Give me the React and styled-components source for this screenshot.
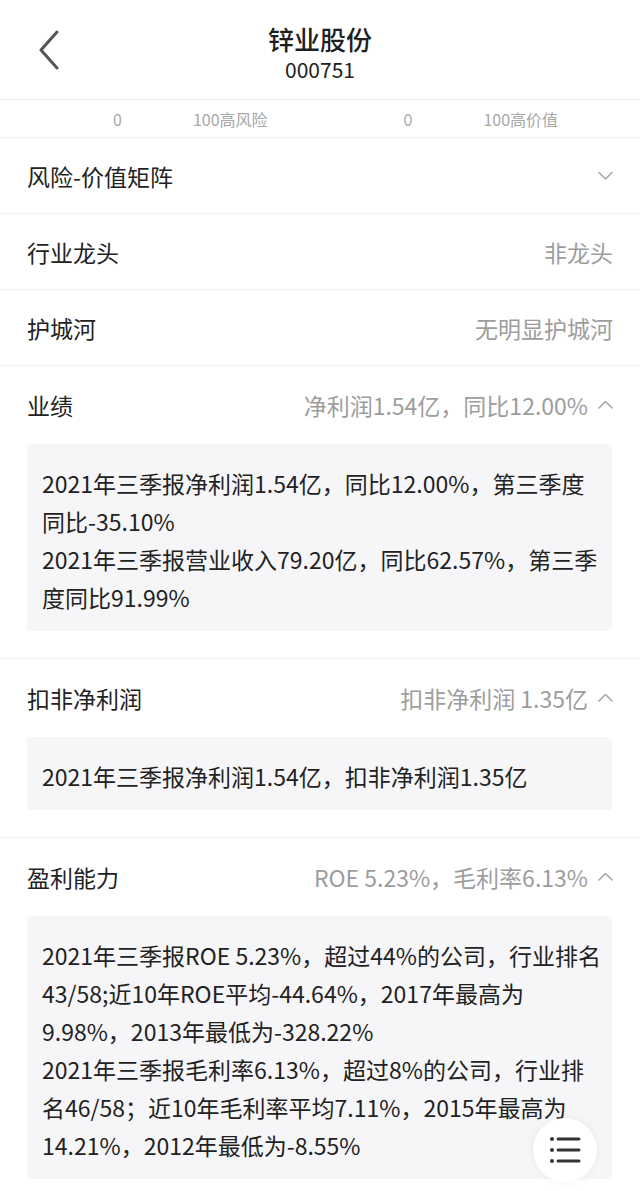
import React from 'react'
import styled, { createGlobalStyle } from 'styled-components'

const GlobalStyle = createGlobalStyle`
    html, body {
        margin: 0;
        padding: 0;
        background: #ffffff;
    }
    body {
        font-family: "Noto Sans CJK SC", "Noto Sans", sans-serif;
        color: #222222;
    }
`;

const Page = styled.div`
    width: 640px;
    min-height: 1191px;
    position: relative;
    overflow: hidden;
    background: #fff;
`;

const Header = styled.header`
    height: 99px;
    display: grid;
    grid-template-columns: 80px 1fr 80px;
    align-items: center;
    border-bottom: 1px solid #ececec;
    box-shadow: 0 1px 2px rgba(0, 0, 0, 0.03);
`;

const BackButton = styled.div`
    display: flex;
    align-items: center;
    padding-left: 38px;
    height: 100%;
`;

const TitleBlock = styled.div`
    display: flex;
    flex-direction: column;
    align-items: center;
    padding-top: 5px;
`;

const Title = styled.h1`
    margin: 0;
    font-size: 26px;
    font-weight: 500;
    line-height: 34px;
    color: #1f1f1f;
`;

const Code = styled.div`
    font-size: 21px;
    line-height: 26px;
    color: #222;
`;

const AxisRow = styled.div`
    height: 37px;
    display: flex;
    align-items: center;
    border-bottom: 1px solid #efefef;
    font-size: 16px;
    color: #a8a8a8;
`;

const AxisText = styled.span`
    margin-left: ${p => p.$offset}px;
`;

const Row = styled.div`
    height: 75px;
    display: flex;
    align-items: center;
    justify-content: space-between;
    padding: 0 27px;
    border-bottom: 1px solid #efefef;
`;

const Section = styled.section`
    padding-bottom: 27px;
    border-bottom: 1px solid #efefef;
`;

const SectionHead = styled.div`
    height: 78px;
    display: flex;
    align-items: center;
    justify-content: space-between;
    padding: 0 27px;
`;

const Label = styled.div`
    font-size: 23px;
    color: #222;
`;

const Value = styled.div`
    display: flex;
    align-items: center;
    gap: 10px;
    font-size: 23px;
    color: #9d9d9d;
`;

const Detail = styled.div`
    margin: 0 28px 0 27px;
    padding: 20px 9px 15px 15px;
    background: #f6f6f8;
    border-radius: 4px;
    font-size: 23px;
    line-height: 38px;
    color: #222;
`;

const Para = styled.p`
    margin: 0;
`;

const Fab = styled.div`
    position: absolute;
    left: 533px;
    top: 1118px;
    width: 64px;
    height: 64px;
    border-radius: 50%;
    background: #fff;
    box-shadow: 0 0 8px rgba(0, 0, 0, 0.06);
    display: flex;
    align-items: center;
    justify-content: center;
`;

const Chevron = ({ dir }) => {
    const d = dir === 'up' ? 'M1 8 L7.5 1.5 L14 8' : 'M1 1.5 L7.5 8 L14 1.5';
    return (
        <svg width="15" height="10" viewBox="0 0 15 10" fill="none">
            <path d={d} stroke="#a8a8a8" strokeWidth="1.6" strokeLinecap="round" strokeLinejoin="round" />
        </svg>
    );
};

const sections = [
    {
        label: '业绩',
        value: '净利润1.54亿，同比12.00%',
        paras: [
            '2021年三季报净利润1.54亿，同比12.00%，第三季度同比-35.10%',
            '2021年三季报营业收入79.20亿，同比62.57%，第三季度同比91.99%',
        ],
    },
    {
        label: '扣非净利润',
        value: '扣非净利润 1.35亿',
        paras: ['2021年三季报净利润1.54亿，扣非净利润1.35亿'],
    },
    {
        label: '盈利能力',
        value: 'ROE 5.23%，毛利率6.13%',
        paras: [
            '2021年三季报ROE 5.23%，超过44%的公司，行业排名43/58;近10年ROE平均-44.64%，2017年最高为9.98%，2013年最低为-328.22%',
            '2021年三季报毛利率6.13%，超过8%的公司，行业排名46/58；近10年毛利率平均7.11%，2015年最高为14.21%，2012年最低为-8.55%',
        ],
    },
];

const App = () => {
    return (
        <Page>
            <GlobalStyle />
            <Header>
                <BackButton>
                    <svg width="22" height="40" viewBox="0 0 22 40" fill="none">
                        <path d="M19 2 L3 20 L19 38" stroke="#555" strokeWidth="3" strokeLinecap="round" strokeLinejoin="round" />
                    </svg>
                </BackButton>
                <TitleBlock>
                    <Title>锌业股份</Title>
                    <Code>000751</Code>
                </TitleBlock>
                <div />
            </Header>

            <AxisRow>
                <AxisText $offset={113}>0</AxisText>
                <AxisText $offset={71}>100高风险</AxisText>
                <AxisText $offset={136}>0</AxisText>
                <AxisText $offset={71}>100高价值</AxisText>
            </AxisRow>

            <Row>
                <Label>风险-价值矩阵</Label>
                <Chevron dir="down" />
            </Row>
            <Row>
                <Label>行业龙头</Label>
                <Value>非龙头</Value>
            </Row>
            <Row>
                <Label>护城河</Label>
                <Value>无明显护城河</Value>
            </Row>

            {sections.map(s => (
                <Section key={s.label}>
                    <SectionHead>
                        <Label>{s.label}</Label>
                        <Value>
                            {s.value}
                            <Chevron dir="up" />
                        </Value>
                    </SectionHead>
                    <Detail>
                        {s.paras.map(p => (
                            <Para key={p}>{p}</Para>
                        ))}
                    </Detail>
                </Section>
            ))}

            <Fab>
                <svg width="32" height="28" viewBox="0 0 32 28" fill="none">
                    <circle cx="3" cy="3" r="2" fill="#333" />
                    <circle cx="3" cy="14" r="2" fill="#333" />
                    <circle cx="3" cy="25" r="2" fill="#333" />
                    <path d="M9 3 H30 M9 14 H30 M9 25 H30" stroke="#333" strokeWidth="3" strokeLinecap="round" />
                </svg>
            </Fab>
        </Page>
    )
}

export default App
